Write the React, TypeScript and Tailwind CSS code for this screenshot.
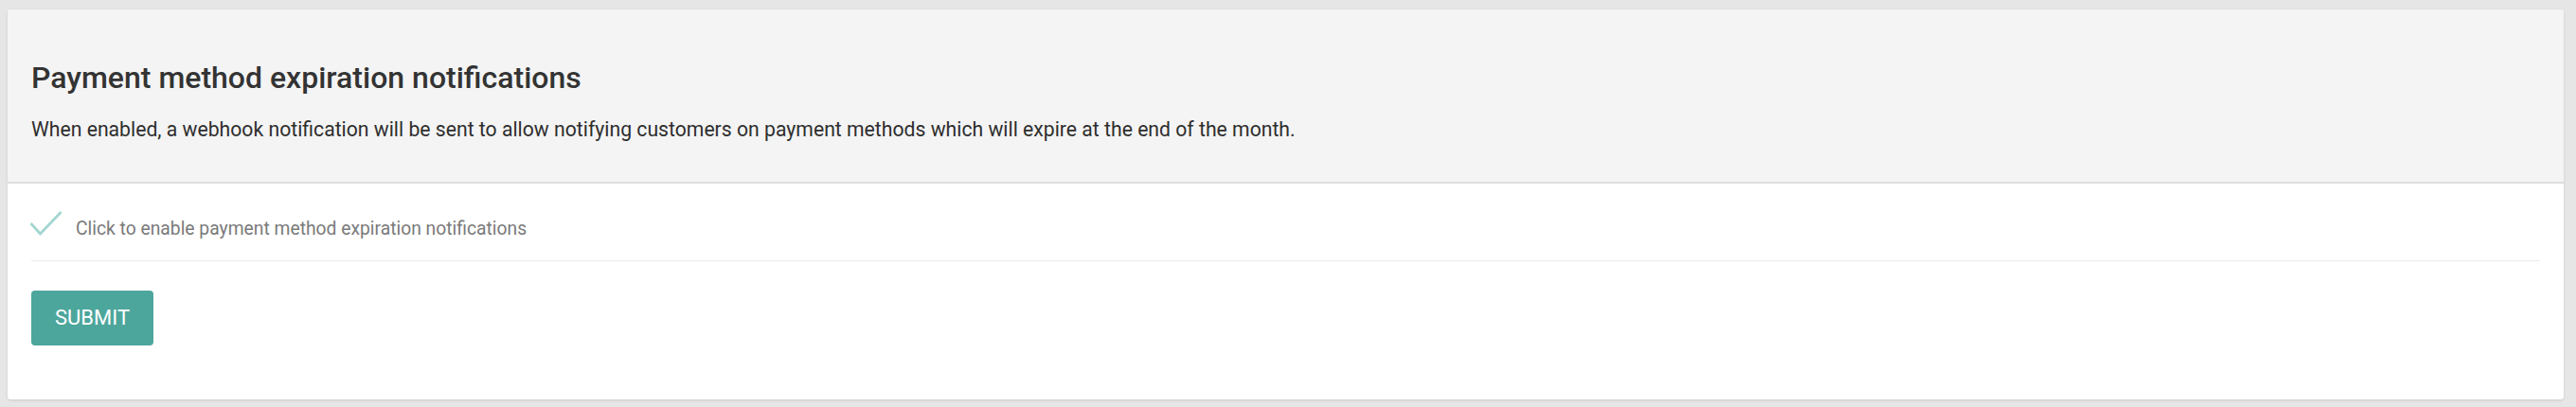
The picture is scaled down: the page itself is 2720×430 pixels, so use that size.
import React from "react";

export default function App() {
  return (
    <div
      className="w-[2720px] h-[430px] bg-[#e5e6e5] pt-[10px] pl-[8px] pr-[13px]"
      style={{ fontFamily: "Roboto, 'Liberation Sans', sans-serif" }}
    >
      <div className="h-[412px] bg-white rounded-[3px] shadow-[0_1px_3px_rgba(0,0,0,0.12)] overflow-hidden flex flex-col">
        <div className="h-[184px] box-border bg-[#f4f4f4] border-b-2 border-[#dedede] pl-[25px] pt-[53px]">
          <h1 className="text-[32px] leading-[38px] font-medium text-[#333333]">
            Payment method expiration notifications
          </h1>
          <p className="mt-[22px] text-[21.2px] leading-[28px] text-[#2e2e2e]">
            When enabled, a webhook notification will be sent to allow notifying customers on payment methods which will expire at the end of the month.
          </p>
        </div>
        <div className="px-[25px]">
          <label className="h-[82px] box-border border-b border-[#ececec] flex items-start cursor-pointer">
            <svg
              className="mt-[29px] ml-[-2px] shrink-0"
              width="36"
              height="28"
              viewBox="0 0 36 28"
              fill="none"
            >
              <polyline
                points="1.5,13 11.5,24 33.5,1"
                stroke="#a3d6d0"
                strokeWidth="2.8"
                fill="none"
              />
            </svg>
            <span className="ml-[13px] mt-[36px] text-[19.3px] leading-[24px] text-[#7a7a7a]">
              Click to enable payment method expiration notifications
            </span>
          </label>
          <button className="mt-[31px] w-[129px] h-[58px] bg-[#4ca69c] rounded-[4px] text-white text-[22px] leading-none">
            SUBMIT
          </button>
        </div>
      </div>
    </div>
  );
}
